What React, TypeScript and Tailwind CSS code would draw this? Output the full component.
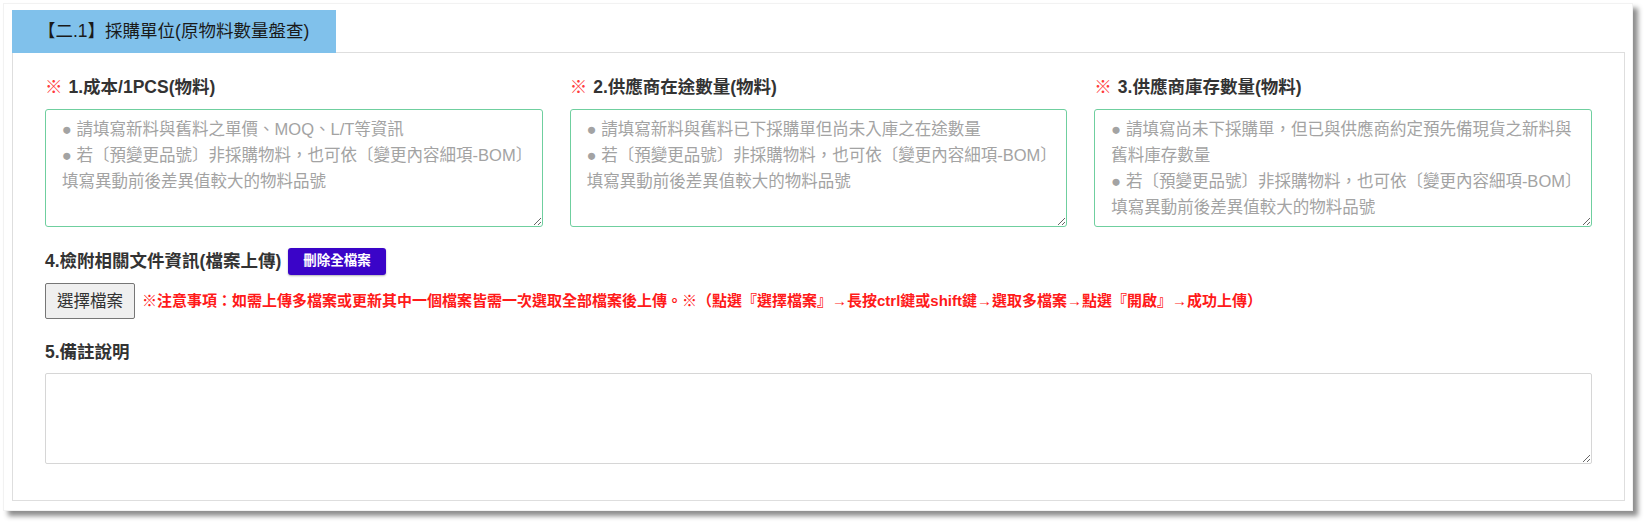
const FONT = "font-['Liberation_Sans','Noto_Sans_CJK_TC',sans-serif]";

const fields = [
  {
    no: "1.成本/1PCS(物料)",
    hint: "● 請填寫新料與舊料之單價、MOQ、L/T等資訊\n● 若〔預變更品號〕非採購物料，也可依〔變更內容細項-BOM〕填寫異動前後差異值較大的物料品號",
  },
  {
    no: "2.供應商在途數量(物料)",
    hint: "● 請填寫新料與舊料已下採購單但尚未入庫之在途數量\n● 若〔預變更品號〕非採購物料，也可依〔變更內容細項-BOM〕填寫異動前後差異值較大的物料品號",
  },
  {
    no: "3.供應商庫存數量(物料)",
    hint: "● 請填寫尚未下採購單，但已與供應商約定預先備現貨之新料與舊料庫存數量\n● 若〔預變更品號〕非採購物料，也可依〔變更內容細項-BOM〕填寫異動前後差異值較大的物料品號",
  },
];

const App = () => {
  return (
    <div className={`w-[1646px] h-[524px] bg-white pt-[3px] pl-[3px] ${FONT}`}>
      <div className="w-[1630px] h-[508px] bg-white border border-[#f2f2f2] shadow-[5px_5px_5px_rgba(0,0,0,0.45)] pt-[6px] pl-[8px] pr-[7px]">
        <div className="flex flex-col">
          <div className="relative z-10 -mb-px w-[324px] h-[43px] bg-[#80c1eb] flex items-center pl-[26px] text-[17.5px] text-[#1a1a1a]">
            【二.1】採購單位(原物料數量盤查)
          </div>
          <div className="h-[449px] border border-[#dedede] px-[32px] pt-[22px]">
            <div className="grid grid-cols-3 gap-[27px]">
              {fields.map((f) => (
                <div key={f.no} className="flex flex-col gap-[10px]">
                  <div className="h-[24px] flex items-center text-[17.5px] font-bold text-[#333]">
                    <span className="text-[#ff3b3b] font-normal mr-[6px]">※</span>
                    {f.no}
                  </div>
                  <textarea
                    placeholder={f.hint}
                    className="h-[118px] w-full border border-[#6fcf9f] rounded-[3px] px-[16px] py-[6px] text-[16.5px] leading-[26px] placeholder:text-[#a3a3a3] outline-none"
                  />
                </div>
              ))}
            </div>

            <div className="mt-[21px] flex items-center gap-[7px]">
              <span className="text-[17.5px] font-bold text-[#333]">4.檢附相關文件資訊(檔案上傳)</span>
              <button className="h-[27px] px-[15px] rounded-[3px] bg-[#3a04c8] text-white text-[13.5px] font-bold shadow-[0_1px_2px_rgba(0,0,0,0.3)]">
                刪除全檔案
              </button>
            </div>

            <div className="mt-[8px] flex items-center gap-[7px]">
              <button className="h-[36px] px-[11px] rounded-[2px] bg-[#efefef] border border-[#767676] text-[16.5px] text-[#333]">
                選擇檔案
              </button>
              <span className="text-[15px] font-bold text-[#ff1a1a]">
                ※注意事項：如需上傳多檔案或更新其中一個檔案皆需一次選取全部檔案後上傳。※（點選『選擇檔案』→長按ctrl鍵或shift鍵→選取多檔案→點選『開啟』→成功上傳）
              </span>
            </div>

            <div className="mt-[21px] h-[24px] flex items-center text-[17.5px] font-bold text-[#333]">5.備註說明</div>
            <textarea className="mt-[9px] block w-full h-[91px] border border-[#d6d6d6] rounded-[2px] outline-none" />
          </div>
        </div>
      </div>
    </div>
  );
};

export default App;
